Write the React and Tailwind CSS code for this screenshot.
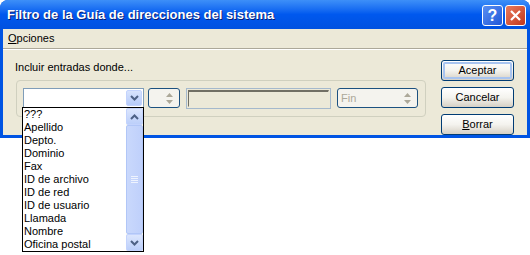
import React from 'react';

const items = [
	'???',
	'Apellido',
	'Depto.',
	'Dominio',
	'Fax',
	'ID de archivo',
	'ID de red',
	'ID de usuario',
	'Llamada',
	'Nombre',
	'Oficina postal',
];

function Chevron({ up = false, color = '#4d6185' }) {
	return (
		<svg width="9" height="6" viewBox="0 0 9 6">
			<polyline
				points={up ? '1,5 4.5,1.5 8,5' : '1,1 4.5,4.5 8,1'}
				fill="none"
				stroke={color}
				strokeWidth="2"
			/>
		</svg>
	);
}

function SpinArrows() {
	return (
		<svg width="7" height="11" viewBox="0 0 7 11">
			<polygon points="3.5,0 7,4 0,4" fill="#aca899" />
			<polygon points="0,7 7,7 3.5,11" fill="#aca899" />
		</svg>
	);
}

function XpButton({ children, active = false }) {
	return (
		<div className="w-[73px] h-[21px] rounded-[3px] border border-[#003c74] bg-gradient-to-b from-white via-[#f4f3ee] to-[#d6d0c5] p-[1px]">
			<div
				className={
					'w-full h-full rounded-[2px] flex items-center justify-center text-black ' +
					(active ? 'border-2 border-[#a8c4f0]' : '')
				}
			>
				{children}
			</div>
		</div>
	);
}

export default function App() {
	return (
		<div
			className="relative w-[530px] h-[255px] bg-white text-[11px] leading-[13px] text-black overflow-hidden"
			style={{ fontFamily: '"Liberation Sans", Arial, sans-serif' }}
		>
			{/* window frame */}
			<div className="w-[530px] h-[138px] rounded-t-[8px] bg-[#0054e3] flex flex-col px-[3px] pb-[3px]">
				{/* title bar */}
				<div className="h-[29px] -mx-[3px] pl-[7px] pr-[4px] rounded-t-[8px] bg-gradient-to-b from-[#3d8ff8] via-[#0058ee] to-[#0051e0] flex items-center">
					<span className="text-white font-bold text-[13px] [text-shadow:1px_1px_0_#0a1e72]">
						Filtro de la Guía de direcciones del sistema
					</span>
					<div className="ml-auto flex gap-[2px] mt-[2px]">
						<div className="w-[21px] h-[21px] rounded-[3px] border border-white bg-gradient-to-br from-[#5a8ff2] to-[#2157d8] flex items-center justify-center text-white font-bold text-[16px] leading-none">
							?
						</div>
						<div className="w-[21px] h-[21px] rounded-[3px] border border-white bg-gradient-to-br from-[#e97a5c] to-[#c2351a] flex items-center justify-center">
							<svg width="11" height="11" viewBox="0 0 11 11">
								<path d="M1 1L10 10M10 1L1 10" stroke="white" strokeWidth="2.2" />
							</svg>
						</div>
					</div>
				</div>

				{/* client area */}
				<div className="flex-1 bg-[#ece9d8] flex flex-col">
					<div className="h-[19px] flex items-center px-[5px]">
						<span>
							<span className="underline">O</span>pciones
						</span>
					</div>
					<div className="border-t border-[#aca899] border-b border-b-white" />

					<div className="flex pl-[13px] pt-[9px]">
						<div className="w-[410px] flex flex-col">
							<div className="h-[13px] -ml-[1px] mt-[2px]">Incluir entradas donde...</div>
							<div className="mt-[6px] h-[37px] rounded-[4px] border border-[#d0d0bf] flex items-start pt-[7px] pl-[6px]">
								{/* combo */}
								<div className="w-[121px] h-[20px] bg-white border border-[#7f9db9] flex justify-end p-[1px]">
									<div className="w-[16px] h-full rounded-[2px] bg-gradient-to-b from-[#d7e3fd] to-[#b6cbfa] border border-[#c3d3fd] flex items-center justify-center">
										<Chevron />
									</div>
								</div>
								{/* spin */}
								<div className="ml-[4px] w-[32px] h-[20px] rounded-[3px] border border-[#1c5180] bg-[#f4f3ee] flex items-center justify-end pr-[6px]">
									<SpinArrows />
								</div>
								{/* disabled text */}
								<div className="ml-[6px] w-[145px] h-[21px] border border-[#a5b9cc] p-[1px]">
									<div className="w-full h-full border-t-2 border-l border-[#716f64] border-b border-r border-b-[#ece9d8] border-r-[#ece9d8] bg-[#ece9d8]" />
								</div>
								{/* Fin */}
								<div className="ml-[6px] w-[81px] h-[20px] rounded-[3px] border border-[#1c5180] bg-[#f4f3ee] flex items-center pl-[3px] pr-[6px] text-[#aca899]">
									<span>Fin</span>
									<span className="ml-auto flex">
										<SpinArrows />
									</span>
								</div>
							</div>
						</div>

						<div className="ml-[15px] flex flex-col gap-[6px] pt-[1px]">
							<XpButton active>Aceptar</XpButton>
							<XpButton>Cancelar</XpButton>
							<XpButton>
								<span>
									<span className="underline">B</span>orrar
								</span>
							</XpButton>
						</div>
					</div>
				</div>
			</div>

			{/* open dropdown list */}
			<div className="absolute left-[22px] top-[107px] w-[122px] h-[145px] bg-white border border-black flex">
				<div className="flex-1 flex flex-col pl-[1px]">
					{items.map((it) => (
						<div key={it} className="h-[13px] leading-[13px] whitespace-nowrap">
							{it}
						</div>
					))}
				</div>
				<div className="w-[17px] bg-[#f7f7f2] flex flex-col">
					<div className="h-[17px] rounded-[2px] bg-gradient-to-b from-[#dce6fd] to-[#bccffa] border border-[#c3d3fd] flex items-center justify-center">
						<Chevron up />
					</div>
					<div className="flex-1 rounded-[2px] bg-gradient-to-r from-[#c9d8fc] to-[#bfd0fb] border border-[#b1c6f7] flex items-center justify-center">
						<svg width="7" height="8" viewBox="0 0 7 8">
							<path d="M0 0.5H7M0 2.5H7M0 4.5H7M0 6.5H7" stroke="#eef3fe" strokeWidth="1" />
						</svg>
					</div>
					<div className="h-[17px] rounded-[2px] bg-gradient-to-b from-[#dce6fd] to-[#bccffa] border border-[#c3d3fd] flex items-center justify-center">
						<Chevron />
					</div>
				</div>
			</div>
		</div>
	);
}
